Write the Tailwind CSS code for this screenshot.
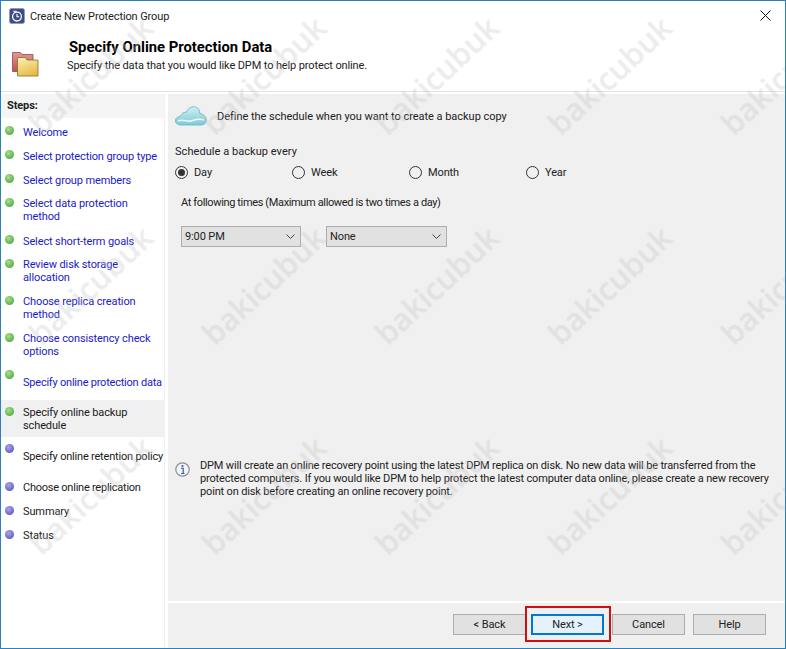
<!DOCTYPE html>
<html>
<head>
<meta charset="utf-8">
<script src="https://cdn.jsdelivr.net/npm/@tailwindcss/browser@4"></script>
</head>
<body class="m-0 bg-white">
<div class="relative w-[786px] h-[649px] overflow-hidden bg-white border border-[#2b80c0] flex flex-col font-['Roboto','Liberation_Sans',sans-serif] text-[11px] tracking-[-0.12px] leading-[13px] text-[#1a1a1a]">

  <!-- title bar -->
  <div class="h-[29px] shrink-0 flex items-center pl-[8px] pr-[14px]">
    <svg width="16" height="16" viewBox="0 0 16 16" class="mr-[5px]">
      <rect x="0.5" y="0.5" width="15" height="15" rx="2" fill="#3d4c86" stroke="#8f9bc4"/>
      <circle cx="8" cy="8.6" r="4.4" fill="none" stroke="#fff" stroke-width="1.3"/>
      <path d="M8 6v2.8h2.2M4.2 3.2h3.4" fill="none" stroke="#fff" stroke-width="1.1"/>
    </svg>
    <span class="flex-1 mt-[1px] text-[#222]">Create New Protection Group</span>
    <svg width="11" height="11" viewBox="0 0 11 11"><path d="M0.5 0.5l10 10M10.5 0.5l-10 10" stroke="#111" stroke-width="1"/></svg>
  </div>

  <!-- header -->
  <div class="h-[62px] shrink-0 border-b border-[#e2e2e2] flex pl-[11px]">
    <svg width="28" height="26" viewBox="0 0 28 26" class="mt-[21px] mr-[27px] shrink-0">
      <defs>
        <linearGradient id="fy" x1="0" y1="0" x2="0.4" y2="1"><stop offset="0" stop-color="#fdf3b8"/><stop offset="1" stop-color="#e8bd4c"/></linearGradient>
        <linearGradient id="fr" x1="0" y1="0" x2="0" y2="1"><stop offset="0" stop-color="#e39a94"/><stop offset="1" stop-color="#b8534f"/></linearGradient>
      </defs>
      <path d="M.5 1.500h8l1.500 2h11v17H.5z" fill="url(#fr)" stroke="#8f4a48" stroke-width=".8"/>
      <path d="M5.500 6.500h8l1.500 2.500h11V25H5.500z" fill="url(#fy)" stroke="#7d6e36" stroke-width=".8"/>
    </svg>
    <div class="pt-[9px]">
      <div class="pl-[2px] font-bold text-[14.800px] leading-[16px] tracking-normal text-black">Specify Online Protection Data</div>
      <div class="mt-[4px] text-[#222]">Specify the data that you would like DPM to help protect online.</div>
    </div>
  </div>

  <!-- body -->
  <div class="flex-1 min-h-0 flex pt-[2px]">
    <!-- sidebar -->
    <div class="w-[164px] shrink-0 mr-[3px] border-r border-[#f0f0f0] flex flex-col">
      <div class="h-[24px] bg-[#f5f5f5] pl-[6px] pt-[5px] font-bold text-[#222]">Steps:</div>
      <div class="flex flex-col pt-[1px] text-[#1a1ac8]">
        <div class="h-[24px] flex pl-[4px] pt-[7px]"><span class="w-[9px] h-[9px] rounded-full bg-[radial-gradient(circle_at_40%_35%,#a6e08a,#3f9a34)] mr-[9px] shrink-0"></span><span>Welcome</span></div>
        <div class="h-[24px] flex pl-[4px] pt-[7px]"><span class="w-[9px] h-[9px] rounded-full bg-[radial-gradient(circle_at_40%_35%,#a6e08a,#3f9a34)] mr-[9px] shrink-0"></span><span>Select protection group type</span></div>
        <div class="h-[24px] flex pl-[4px] pt-[7px]"><span class="w-[9px] h-[9px] rounded-full bg-[radial-gradient(circle_at_40%_35%,#a6e08a,#3f9a34)] mr-[9px] shrink-0"></span><span>Select group members</span></div>
        <div class="h-[37px] flex pl-[4px] pt-[6px]"><span class="w-[9px] h-[9px] mt-[1px] rounded-full bg-[radial-gradient(circle_at_40%_35%,#a6e08a,#3f9a34)] mr-[9px] shrink-0"></span><span>Select data protection<br>method</span></div>
        <div class="h-[24px] flex pl-[4px] pt-[7px]"><span class="w-[9px] h-[9px] rounded-full bg-[radial-gradient(circle_at_40%_35%,#a6e08a,#3f9a34)] mr-[9px] shrink-0"></span><span>Select short-term goals</span></div>
        <div class="h-[37px] flex pl-[4px] pt-[6px]"><span class="w-[9px] h-[9px] mt-[1px] rounded-full bg-[radial-gradient(circle_at_40%_35%,#a6e08a,#3f9a34)] mr-[9px] shrink-0"></span><span>Review disk storage<br>allocation</span></div>
        <div class="h-[37px] flex pl-[4px] pt-[6px]"><span class="w-[9px] h-[9px] mt-[1px] rounded-full bg-[radial-gradient(circle_at_40%_35%,#a6e08a,#3f9a34)] mr-[9px] shrink-0"></span><span>Choose replica creation<br>method</span></div>
        <div class="h-[37px] flex pl-[4px] pt-[6px]"><span class="w-[9px] h-[9px] mt-[1px] rounded-full bg-[radial-gradient(circle_at_40%_35%,#a6e08a,#3f9a34)] mr-[9px] shrink-0"></span><span>Choose consistency check<br>options</span></div>
        <div class="h-[37px] flex pl-[4px] pt-[6px]"><span class="w-[9px] h-[9px] mt-[1px] rounded-full bg-[radial-gradient(circle_at_40%_35%,#a6e08a,#3f9a34)] mr-[9px] shrink-0"></span><span class="mt-[7px] whitespace-nowrap tracking-[-0.22px]">Specify online protection data</span></div>
        <div class="h-[37px] flex pl-[4px] pt-[6px] bg-[#f0f0f0] text-[#1a1a1a]"><span class="w-[9px] h-[9px] mt-[1px] rounded-full bg-[radial-gradient(circle_at_40%_35%,#a6e08a,#3f9a34)] mr-[9px] shrink-0"></span><span>Specify online backup<br>schedule</span></div>
        <div class="h-[37px] flex pl-[4px] pt-[6px] text-[#1a1a1a]"><span class="w-[9px] h-[9px] mt-[1px] rounded-full bg-[radial-gradient(circle_at_40%_35%,#a9a6ec,#4a46b0)] mr-[9px] shrink-0"></span><span class="mt-[7px] whitespace-nowrap tracking-[-0.2px]">Specify online retention policy</span></div>
        <div class="h-[24px] flex pl-[4px] pt-[7px] text-[#1a1a1a]"><span class="w-[9px] h-[9px] mt-[1px] rounded-full bg-[radial-gradient(circle_at_40%_35%,#a9a6ec,#4a46b0)] mr-[9px] shrink-0"></span><span class="tracking-[-0.24px]">Choose online replication</span></div>
        <div class="h-[24px] flex pl-[4px] pt-[7px] text-[#1a1a1a]"><span class="w-[9px] h-[9px] mt-[1px] rounded-full bg-[radial-gradient(circle_at_40%_35%,#a9a6ec,#4a46b0)] mr-[9px] shrink-0"></span><span>Summary</span></div>
        <div class="h-[24px] flex pl-[4px] pt-[7px] text-[#1a1a1a]"><span class="w-[9px] h-[9px] mt-[1px] rounded-full bg-[radial-gradient(circle_at_40%_35%,#a9a6ec,#4a46b0)] mr-[9px] shrink-0"></span><span>Status</span></div>
      </div>
    </div>

    <!-- main -->
    <div class="flex-1 min-w-0 bg-[#f0f0f0] flex flex-col">
      <div class="flex-1 min-h-0 flex flex-col pl-[7px] pt-[12px] text-[#222]">
        <div class="flex items-center h-[20px]">
          <svg width="32" height="20" viewBox="0 0 32 20" class="mr-[10px] shrink-0">
            <defs><linearGradient id="cl" x1="0" y1="0" x2="0" y2="1"><stop offset="0" stop-color="#cdeff3"/><stop offset="1" stop-color="#7fcbd8"/></linearGradient></defs>
            <path d="M6 19C2 19 0 16.5 .5 14c.4-2.2 2.4-3.6 5-3.6C6.500 7 9 6 11 6.500 13 2 17 0 20.500 1c3 .9 4.500 3.500 4.300 6.500 3.500.5 6.500 3 6.500 6.500 0 3-2.300 5-5.300 5z" fill="url(#cl)" stroke="#5fb4c4" stroke-width=".8"/>
            <path d="M3 15c5-2 9 1 13 0s7-3 13-1" fill="none" stroke="#e8fbfd" stroke-width="1.500"/>
          </svg>
          <span class="tracking-[-0.03px]">Define the schedule when you want to create a backup copy</span>
        </div>
        <div class="mt-[19px] tracking-[0.05px]">Schedule a backup every</div>
        <div class="flex mt-[7px] h-[14px] items-center">
          <div class="w-[117px] flex items-center"><span class="w-[13px] h-[13px] rounded-full border border-[#333] flex items-center justify-center mr-[6px]"><span class="w-[7px] h-[7px] rounded-full bg-[#333]"></span></span>Day</div>
          <div class="w-[117px] flex items-center"><span class="w-[13px] h-[13px] rounded-full border border-[#333] mr-[6px]"></span>Week</div>
          <div class="w-[117px] flex items-center"><span class="w-[13px] h-[13px] rounded-full border border-[#333] mr-[6px]"></span>Month</div>
          <div class="w-[117px] flex items-center"><span class="w-[13px] h-[13px] rounded-full border border-[#333] mr-[6px]"></span>Year</div>
        </div>
        <div class="mt-[17px] pl-[6px] tracking-[-0.36px]">At following times (Maximum allowed is two times a day)</div>
        <div class="flex gap-[25px] mt-[17px] pl-[6px]">
          <div class="w-[120px] h-[21px] bg-[#e1e1e1] border border-[#adadad] flex items-center justify-between pl-[3px] pr-[5px]"><span>9:00 PM</span><svg width="9" height="5" viewBox="0 0 9 5"><path d="M.5.5l4 4 4-4" fill="none" stroke="#444"/></svg></div>
          <div class="w-[121px] h-[21px] bg-[#e1e1e1] border border-[#adadad] flex items-center justify-between pl-[3px] pr-[5px]"><span>None</span><svg width="9" height="5" viewBox="0 0 9 5"><path d="M.5.5l4 4 4-4" fill="none" stroke="#444"/></svg></div>
        </div>
        <div class="flex mt-[212px]">
          <svg width="15" height="15" viewBox="0 0 15 15" class="mt-[3px] mr-[10px] shrink-0">
            <circle cx="7.500" cy="7.500" r="6.700" fill="#f4f4f8" stroke="#8a8f99" stroke-width="1.200"/>
            <circle cx="7.500" cy="4" r="1.100" fill="#2f5fb0"/>
            <path d="M6.200 6.300h2v5h1M6 11.500h3.500" fill="none" stroke="#2f5fb0" stroke-width="1.200"/>
          </svg>
          <p class="w-[575px] tracking-[-0.16px]">DPM will create an online recovery point using the latest DPM replica on disk. No new data will be transferred from the protected computers. If you would like DPM to help protect the latest computer data online, please create a new recovery point on disk before creating an online recovery point.</p>
        </div>
      </div>
      <!-- footer -->
      <div class="h-[47px] shrink-0 border-t-[2px] border-white flex justify-end items-start pt-[11px] pr-[19px] text-[#222]">
        <div class="w-[73px] h-[21px] bg-[#e1e1e1] border border-[#adadad] flex items-center justify-center">&lt; Back</div>
        <div class="w-[73px] h-[21px] ml-[5px] bg-[#e5f1fb] border-[2px] border-[#0078d7] flex items-center justify-center">Next &gt;</div>
        <div class="w-[73px] h-[21px] ml-[8px] bg-[#e1e1e1] border border-[#adadad] flex items-center justify-center">Cancel</div>
        <div class="w-[73px] h-[21px] ml-[8px] bg-[#e1e1e1] border border-[#adadad] flex items-center justify-center">Help</div>
      </div>
    </div>
  </div>

  <!-- red annotation box -->
  <div class="absolute left-[524px] top-[605px] w-[86px] h-[36px] border-[2px] border-[#d01010]"></div>

  <!-- watermark -->
  <div class="absolute left-[3px] -top-[31px] grid grid-cols-[repeat(5,173px)] grid-rows-[repeat(3,210px)] pointer-events-none font-['Open_Sans',sans-serif] font-semibold text-[31px] tracking-normal text-white/25 [text-shadow:0_0_1px_rgba(0,0,0,0.1)]">
    <div class="flex items-center justify-center -rotate-[43deg]">bakicubuk</div>
    <div class="flex items-center justify-center -rotate-[43deg]">bakicubuk</div>
    <div class="flex items-center justify-center -rotate-[43deg]">bakicubuk</div>
    <div class="flex items-center justify-center -rotate-[43deg]">bakicubuk</div>
    <div class="flex items-center justify-center -rotate-[43deg]">bakicubuk</div>
    <div class="flex items-center justify-center -rotate-[43deg]">bakicubuk</div>
    <div class="flex items-center justify-center -rotate-[43deg]">bakicubuk</div>
    <div class="flex items-center justify-center -rotate-[43deg]">bakicubuk</div>
    <div class="flex items-center justify-center -rotate-[43deg]">bakicubuk</div>
    <div class="flex items-center justify-center -rotate-[43deg]">bakicubuk</div>
    <div class="flex items-center justify-center -rotate-[43deg]">bakicubuk</div>
    <div class="flex items-center justify-center -rotate-[43deg]">bakicubuk</div>
    <div class="flex items-center justify-center -rotate-[43deg]">bakicubuk</div>
    <div class="flex items-center justify-center -rotate-[43deg]">bakicubuk</div>
    <div class="flex items-center justify-center -rotate-[43deg]">bakicubuk</div>
  </div>
</div>
</body>
</html>
